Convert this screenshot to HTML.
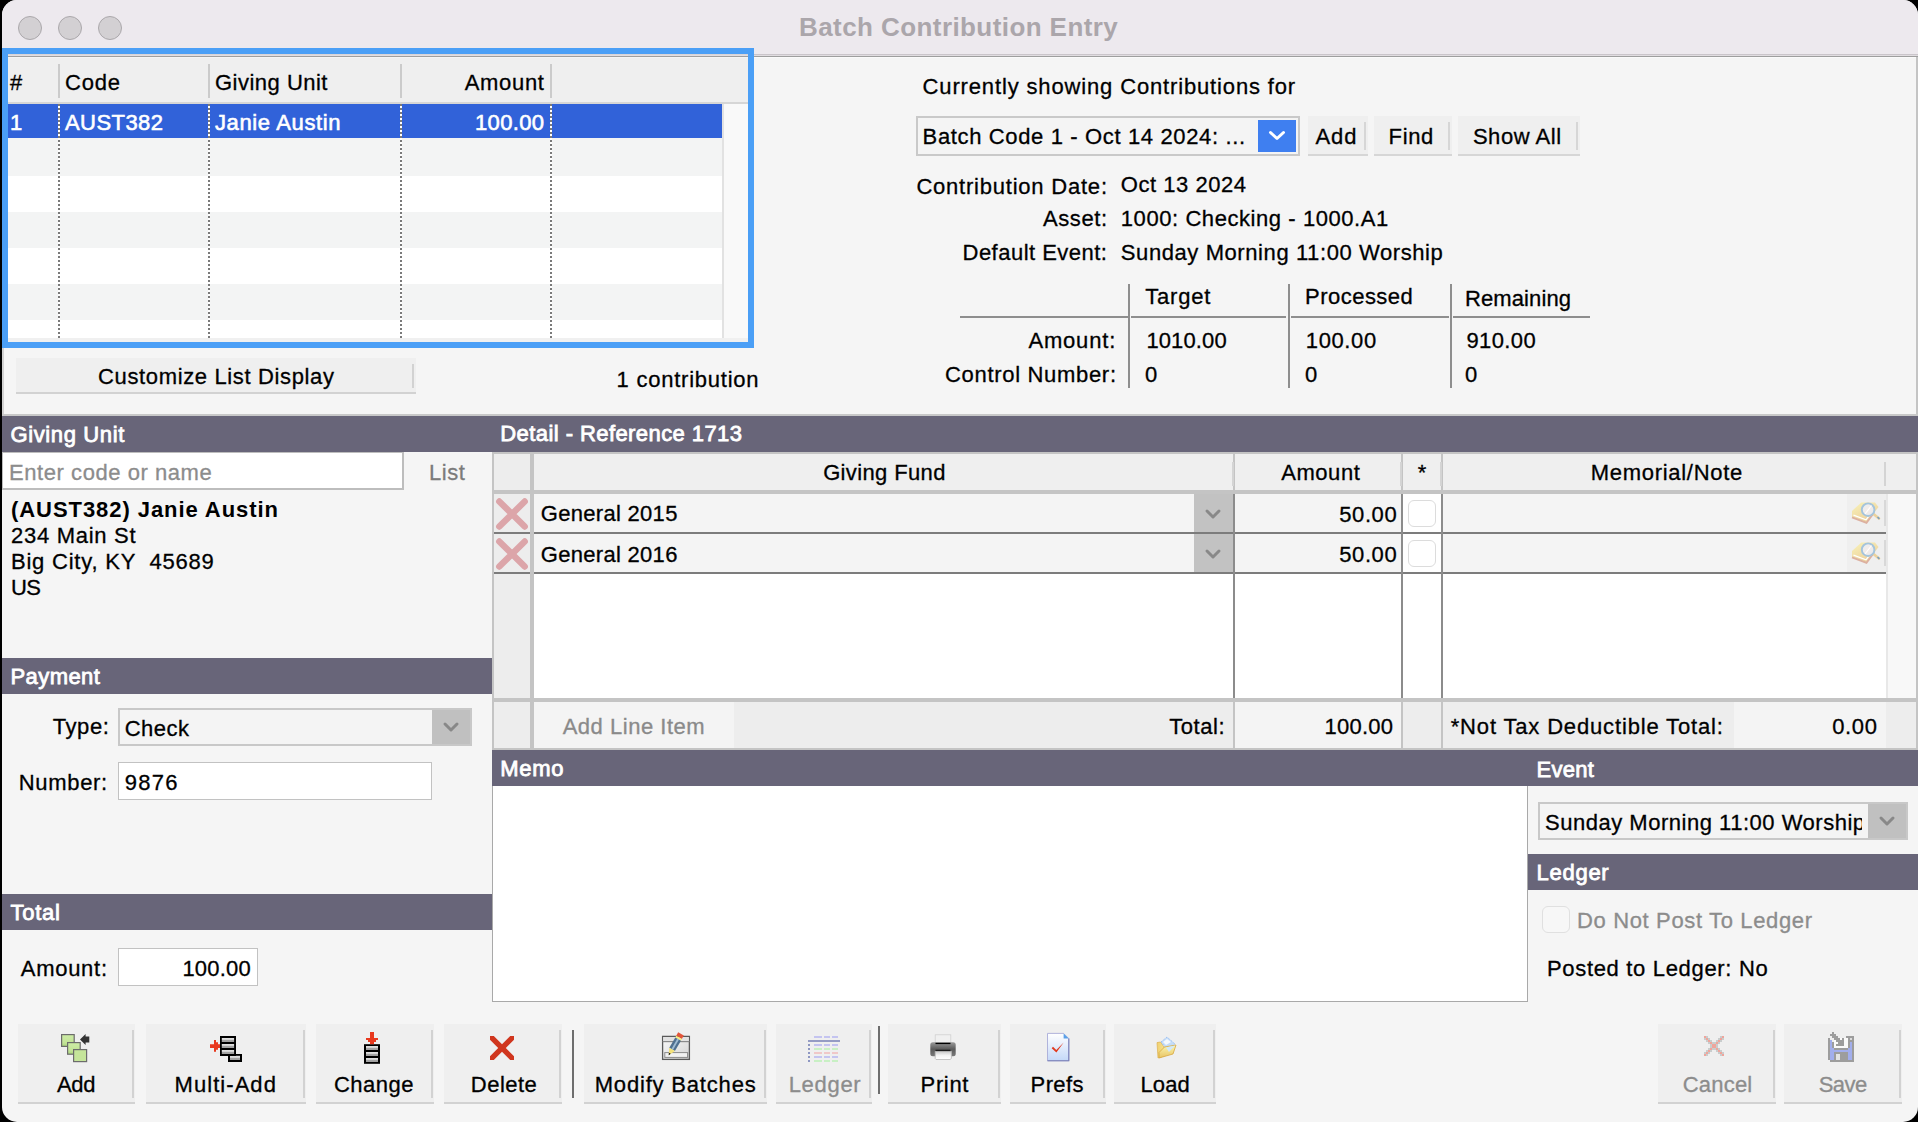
<!DOCTYPE html>
<html><head><meta charset="utf-8">
<style>
*{box-sizing:border-box;margin:0;padding:0}
html,body{width:1918px;height:1122px;overflow:hidden;background:#000}
body{font-family:"Liberation Sans",sans-serif;font-size:23px;color:#000;position:relative}
.a{position:absolute}
.t{position:absolute;white-space:pre;line-height:1;-webkit-text-stroke:0.3px}
.tb{-webkit-text-stroke:0.8px}
svg{position:absolute;overflow:visible}
#win{position:absolute;left:2px;top:0;width:1916px;height:1122px;background:#f5f5f5;border-radius:15px;overflow:hidden}
#in{position:absolute;left:-2px;top:0;width:1918px;height:1122px}
</style></head><body>
<div id="win"><div id="in">
<div class="a" style="left:0px;top:0px;width:1918px;height:54px;background:#ede9ee;"></div>
<div class="a" style="left:0px;top:54px;width:1918px;height:1px;background:#cac5ca;"></div>
<div class="a" style="left:0px;top:55px;width:1918px;height:1px;background:#e1dde1;"></div>
<div class="a" style="left:0px;top:56px;width:1918px;height:1px;background:#9e9e9e;"></div>
<div class="a" style="left:0px;top:57px;width:1918px;height:1px;background:#fafafa;"></div>
<div class="a" style="left:18px;top:16px;width:24px;height:24px;background:#d3d0d3;border-radius:50%;border:1px solid #aba8ab;"></div>
<div class="a" style="left:58px;top:16px;width:24px;height:24px;background:#d3d0d3;border-radius:50%;border:1px solid #aba8ab;"></div>
<div class="a" style="left:98px;top:16px;width:24px;height:24px;background:#d3d0d3;border-radius:50%;border:1px solid #aba8ab;"></div>
<div class="t" style="left:799.05px;top:13.80px;font-size:26px;color:#aba6ab;font-weight:700;letter-spacing:0.418px;-webkit-text-stroke:0;">Batch Contribution Entry</div>
<div class="a" style="left:2px;top:57px;width:2px;height:359px;background:#d2d2d2;"></div>
<div class="a" style="left:1916px;top:57px;width:2px;height:359px;background:#c4c4c4;"></div>
<div class="a" style="left:2px;top:414px;width:1916px;height:2px;background:#c8c8c8;"></div>
<div class="a" style="left:2px;top:48px;width:752px;height:300px;background:#4b9ff6;"></div>
<div class="a" style="left:8px;top:54px;width:740px;height:288px;background:#f4f4f4;"></div>
<div class="a" style="left:8px;top:54px;width:740px;height:1px;background:#d9d4d6;"></div>
<div class="a" style="left:8px;top:55px;width:740px;height:1px;background:#e1dde1;"></div>
<div class="a" style="left:8px;top:56px;width:740px;height:1px;background:#9e9e9e;"></div>
<div class="a" style="left:8px;top:57px;width:740px;height:1px;background:#f4f4f4;"></div>
<div class="a" style="left:8px;top:58px;width:740px;height:44px;background:#efefef;"></div>
<div class="a" style="left:8px;top:102px;width:740px;height:2px;background:#d6d6d6;"></div>
<div class="a" style="left:58px;top:64px;width:2px;height:34px;background:#cbcbcb;"></div>
<div class="a" style="left:208px;top:64px;width:2px;height:34px;background:#cbcbcb;"></div>
<div class="a" style="left:400px;top:64px;width:2px;height:34px;background:#cbcbcb;"></div>
<div class="a" style="left:550px;top:64px;width:2px;height:34px;background:#cbcbcb;"></div>
<div class="a" style="left:8px;top:104px;width:714px;height:34px;background:#3162d9;"></div>
<div class="a" style="left:8px;top:138px;width:714px;height:38px;background:#f3f4f4;"></div>
<div class="a" style="left:8px;top:176px;width:714px;height:36px;background:#ffffff;"></div>
<div class="a" style="left:8px;top:212px;width:714px;height:36px;background:#f3f4f4;"></div>
<div class="a" style="left:8px;top:248px;width:714px;height:36px;background:#ffffff;"></div>
<div class="a" style="left:8px;top:284px;width:714px;height:36px;background:#f3f4f4;"></div>
<div class="a" style="left:8px;top:320px;width:714px;height:18px;background:#ffffff;"></div>
<div class="a" style="left:722px;top:104px;width:2px;height:234px;background:#e2e2e2;"></div>
<div class="a" style="left:724px;top:104px;width:24px;height:234px;background:#f9f9f9;"></div>
<div class="a" style="left:8px;top:338px;width:740px;height:4px;background:#f0f0f0;"></div>
<div class="a" style="left:58px;top:104px;width:2px;height:234px;background:repeating-linear-gradient(to bottom,#7a7a7a 0,#7a7a7a 2px,#ffffff 2px,#ffffff 4px);"></div>
<div class="a" style="left:208px;top:104px;width:2px;height:234px;background:repeating-linear-gradient(to bottom,#7a7a7a 0,#7a7a7a 2px,#ffffff 2px,#ffffff 4px);"></div>
<div class="a" style="left:400px;top:104px;width:2px;height:234px;background:repeating-linear-gradient(to bottom,#7a7a7a 0,#7a7a7a 2px,#ffffff 2px,#ffffff 4px);"></div>
<div class="a" style="left:550px;top:104px;width:2px;height:234px;background:repeating-linear-gradient(to bottom,#7a7a7a 0,#7a7a7a 2px,#ffffff 2px,#ffffff 4px);"></div>
<div class="t" style="left:10.00px;top:72.00px;font-size:22.0px;color:#000;">#</div>
<div class="t" style="left:65.00px;top:72.00px;font-size:22.0px;color:#000;letter-spacing:0.797px;">Code</div>
<div class="t" style="left:215.00px;top:72.00px;font-size:22.0px;color:#000;letter-spacing:0.489px;">Giving Unit</div>
<div class="t" style="left:464.73px;top:72.00px;font-size:22.0px;color:#000;letter-spacing:0.688px;">Amount</div>
<div class="t" style="left:10.00px;top:112.00px;font-size:22.0px;color:#fff;-webkit-text-stroke:0.6px;">1</div>
<div class="t" style="left:65.00px;top:112.00px;font-size:22.0px;color:#fff;letter-spacing:0.435px;-webkit-text-stroke:0.6px;">AUST382</div>
<div class="t" style="left:215.00px;top:112.00px;font-size:22.0px;color:#fff;letter-spacing:0.624px;-webkit-text-stroke:0.6px;">Janie Austin</div>
<div class="t" style="left:475.00px;top:112.00px;font-size:22.0px;color:#fff;letter-spacing:0.341px;-webkit-text-stroke:0.6px;">100.00</div>
<div class="a" style="left:16px;top:358px;width:400px;height:36px;background:#efefef;"></div>
<div class="a" style="left:16px;top:392px;width:400px;height:2px;background:#d2d2d2;"></div>
<div class="a" style="left:412px;top:364px;width:2px;height:24px;background:#d2d2d2;"></div>
<div class="t" style="left:98.00px;top:366.30px;font-size:22.0px;color:#000;letter-spacing:0.642px;">Customize List Display</div>
<div class="t" style="left:616.60px;top:368.60px;font-size:22.0px;color:#000;letter-spacing:0.762px;">1 contribution</div>
<div class="t" style="left:922.60px;top:76.00px;font-size:22.0px;color:#000;letter-spacing:0.853px;">Currently showing Contributions for</div>
<div class="a" style="left:916px;top:116px;width:384px;height:40px;background:#c9c9c9;"></div>
<div class="a" style="left:918px;top:118px;width:380px;height:36px;background:#f4f4f4;"></div>
<div class="a" style="left:1258px;top:120px;width:38px;height:32px;background:#3f7ff0;"></div>
<svg style="left:1268px;top:129px" width="18" height="14" viewBox="0 0 18 14"><path d="M2.5 3.5 L9 9.5 L15.5 3.5" fill="none" stroke="#fff" stroke-width="3" stroke-linecap="round" stroke-linejoin="round"/></svg>
<div class="t" style="left:922.60px;top:126.00px;font-size:22.0px;color:#000;letter-spacing:0.637px;">Batch Code 1 - Oct 14 2024: ...</div>
<div class="a" style="left:1308px;top:116px;width:60px;height:40px;background:#efefef;"></div>
<div class="a" style="left:1308px;top:154px;width:60px;height:2px;background:#d6d6d6;"></div>
<div class="a" style="left:1364px;top:122px;width:2px;height:28px;background:#d6d6d6;"></div>
<div class="t" style="left:1315.53px;top:126.00px;font-size:22.0px;color:#000;letter-spacing:0.891px;">Add</div>
<div class="a" style="left:1374px;top:116px;width:78px;height:40px;background:#efefef;"></div>
<div class="a" style="left:1374px;top:154px;width:78px;height:2px;background:#d6d6d6;"></div>
<div class="a" style="left:1448px;top:122px;width:2px;height:28px;background:#d6d6d6;"></div>
<div class="t" style="left:1388.62px;top:126.00px;font-size:22.0px;color:#000;letter-spacing:0.651px;">Find</div>
<div class="a" style="left:1458px;top:116px;width:122px;height:40px;background:#efefef;"></div>
<div class="a" style="left:1458px;top:154px;width:122px;height:2px;background:#d6d6d6;"></div>
<div class="a" style="left:1576px;top:122px;width:2px;height:28px;background:#d6d6d6;"></div>
<div class="t" style="left:1472.89px;top:126.00px;font-size:22.0px;color:#000;letter-spacing:0.547px;">Show All</div>
<div class="t" style="left:916.40px;top:176.30px;font-size:22.0px;color:#000;letter-spacing:0.781px;">Contribution Date:</div>
<div class="t" style="left:1120.80px;top:174.10px;font-size:22.0px;color:#000;letter-spacing:0.544px;">Oct 13 2024</div>
<div class="t" style="left:1043.08px;top:208.00px;font-size:22.0px;color:#000;letter-spacing:0.556px;">Asset:</div>
<div class="t" style="left:1120.80px;top:208.00px;font-size:22.0px;color:#000;letter-spacing:0.569px;">1000: Checking - 1000.A1</div>
<div class="t" style="left:962.53px;top:242.00px;font-size:22.0px;color:#000;letter-spacing:0.483px;">Default Event:</div>
<div class="t" style="left:1120.80px;top:242.00px;font-size:22.0px;color:#000;letter-spacing:0.587px;">Sunday Morning 11:00 Worship</div>
<div class="a" style="left:960px;top:315.5px;width:168px;height:2.0px;background:#8e8e8e;"></div>
<div class="a" style="left:1131px;top:315.5px;width:155px;height:2.0px;background:#8e8e8e;"></div>
<div class="a" style="left:1291px;top:315.5px;width:158px;height:2.0px;background:#8e8e8e;"></div>
<div class="a" style="left:1453px;top:315.5px;width:137px;height:2.0px;background:#8e8e8e;"></div>
<div class="a" style="left:1128px;top:284px;width:2px;height:104px;background:#8e8e8e;"></div>
<div class="a" style="left:1288px;top:284px;width:2px;height:104px;background:#8e8e8e;"></div>
<div class="a" style="left:1450px;top:284px;width:2px;height:104px;background:#8e8e8e;"></div>
<div class="t" style="left:1145.30px;top:286.00px;font-size:22.0px;color:#000;letter-spacing:0.769px;">Target</div>
<div class="t" style="left:1305.10px;top:286.00px;font-size:22.0px;color:#000;letter-spacing:0.468px;">Processed</div>
<div class="t" style="left:1465.00px;top:288.40px;font-size:22.0px;color:#000;letter-spacing:0.104px;">Remaining</div>
<div class="t" style="left:1028.40px;top:330.30px;font-size:22.0px;color:#000;letter-spacing:0.827px;">Amount:</div>
<div class="t" style="left:1146.40px;top:330.30px;font-size:22.0px;color:#000;letter-spacing:0.128px;">1010.00</div>
<div class="t" style="left:1305.80px;top:330.30px;font-size:22.0px;color:#000;letter-spacing:0.621px;">100.00</div>
<div class="t" style="left:1466.40px;top:330.30px;font-size:22.0px;color:#000;letter-spacing:0.401px;">910.00</div>
<div class="t" style="left:945.00px;top:364.00px;font-size:22.0px;color:#000;letter-spacing:0.686px;">Control Number:</div>
<div class="t" style="left:1145.00px;top:364.00px;font-size:22.0px;color:#000;">0</div>
<div class="t" style="left:1305.00px;top:364.00px;font-size:22.0px;color:#000;">0</div>
<div class="t" style="left:1465.00px;top:364.00px;font-size:22.0px;color:#000;">0</div>
<div class="a" style="left:2px;top:416px;width:1916px;height:36px;background:#686579;"></div>
<div class="t" style="left:10.40px;top:424.00px;font-size:22.0px;color:#fff;letter-spacing:0.631px;-webkit-text-stroke:0.8px;">Giving Unit</div>
<div class="t" style="left:500.30px;top:423.20px;font-size:22.0px;color:#fff;letter-spacing:0.425px;-webkit-text-stroke:0.8px;">Detail - Reference 1713</div>
<div class="a" style="left:2px;top:452px;width:402px;height:38px;background:#bdbdbd;"></div>
<div class="a" style="left:3px;top:453px;width:399px;height:35px;background:#ffffff;"></div>
<div class="t" style="left:9.10px;top:461.60px;font-size:22.0px;color:#8c8c8c;letter-spacing:0.551px;">Enter code or name</div>
<div class="t" style="left:429.00px;top:462.00px;font-size:22.0px;color:#7b7b7b;letter-spacing:0.516px;">List</div>
<div class="t" style="left:11.00px;top:499.40px;font-size:22.0px;color:#000;font-weight:700;letter-spacing:0.935px;-webkit-text-stroke:0;">(AUST382) Janie Austin</div>
<div class="t" style="left:11.00px;top:525.00px;font-size:22.0px;color:#000;letter-spacing:0.719px;">234 Main St</div>
<div class="t" style="left:11.00px;top:551.00px;font-size:22.0px;color:#000;letter-spacing:0.781px;">Big City, KY  45689</div>
<div class="t" style="left:11.00px;top:576.60px;font-size:22.0px;color:#000;letter-spacing:-0.562px;">US</div>
<div class="a" style="left:2px;top:658px;width:490px;height:36px;background:#686579;"></div>
<div class="t" style="left:10.50px;top:665.90px;font-size:22.0px;color:#fff;letter-spacing:0.429px;-webkit-text-stroke:0.8px;">Payment</div>
<div class="a" style="left:118px;top:708px;width:354px;height:38px;background:#c8c8c8;"></div>
<div class="a" style="left:120px;top:710px;width:312px;height:34px;background:#f4f4f4;"></div>
<div class="a" style="left:432px;top:710px;width:38px;height:34px;background:#c0c0c0;"></div>
<svg style="left:443px;top:721px" width="16" height="12" viewBox="0 0 16 12"><path d="M2 3 L8 9 L14 3" fill="none" stroke="#888888" stroke-width="3" stroke-linecap="round" stroke-linejoin="round"/></svg>
<div class="t" style="left:52.80px;top:716.00px;font-size:22.0px;color:#000;letter-spacing:0.547px;">Type:</div>
<div class="t" style="left:124.70px;top:717.60px;font-size:22.0px;color:#000;letter-spacing:0.485px;">Check</div>
<div class="a" style="left:118px;top:762px;width:314px;height:38px;background:#c2c2c2;"></div>
<div class="a" style="left:119px;top:763px;width:312px;height:36px;background:#ffffff;"></div>
<div class="t" style="left:18.80px;top:772.00px;font-size:22.0px;color:#000;letter-spacing:0.673px;">Number:</div>
<div class="t" style="left:124.70px;top:772.00px;font-size:22.0px;color:#000;letter-spacing:1.282px;">9876</div>
<div class="a" style="left:2px;top:894px;width:490px;height:36px;background:#686579;"></div>
<div class="t" style="left:10.50px;top:901.70px;font-size:22.0px;color:#fff;letter-spacing:0.754px;-webkit-text-stroke:0.8px;">Total</div>
<div class="a" style="left:118px;top:948px;width:140px;height:38px;background:#c2c2c2;"></div>
<div class="a" style="left:119px;top:949px;width:138px;height:36px;background:#ffffff;"></div>
<div class="t" style="left:20.80px;top:957.70px;font-size:22.0px;color:#000;letter-spacing:0.710px;">Amount:</div>
<div class="t" style="left:182.40px;top:957.70px;font-size:22.0px;color:#000;letter-spacing:0.201px;">100.00</div>
<div class="a" style="left:492px;top:452px;width:1426px;height:298px;background:#c4c4c4;"></div>
<div class="a" style="left:494px;top:454px;width:36px;height:36px;background:#ededed;"></div>
<div class="a" style="left:534px;top:454px;width:699px;height:36px;background:#efefef;"></div>
<div class="a" style="left:1235px;top:454px;width:166px;height:36px;background:#efefef;"></div>
<div class="a" style="left:1403px;top:454px;width:38px;height:36px;background:#efefef;"></div>
<div class="a" style="left:1443px;top:454px;width:473px;height:36px;background:#efefef;"></div>
<div class="a" style="left:1232px;top:462px;width:2px;height:24px;background:#d4d4d4;"></div>
<div class="a" style="left:1400px;top:462px;width:2px;height:24px;background:#d4d4d4;"></div>
<div class="a" style="left:1440px;top:462px;width:2px;height:24px;background:#d4d4d4;"></div>
<div class="a" style="left:1884px;top:462px;width:2px;height:24px;background:#d4d4d4;"></div>
<div class="t" style="left:823.15px;top:462.00px;font-size:22.0px;color:#000;letter-spacing:0.367px;">Giving Fund</div>
<div class="t" style="left:1281.15px;top:462.00px;font-size:22.0px;color:#000;letter-spacing:0.574px;">Amount</div>
<div class="t" style="left:1417.72px;top:462.00px;font-size:22.0px;color:#000;">*</div>
<div class="t" style="left:1590.80px;top:462.00px;font-size:22.0px;color:#000;letter-spacing:0.696px;">Memorial/Note</div>
<div class="a" style="left:494px;top:494px;width:36px;height:204px;background:#ededed;"></div>
<div class="a" style="left:494px;top:532px;width:36px;height:2px;background:#7c7c7c;"></div>
<div class="a" style="left:494px;top:572px;width:36px;height:2px;background:#7c7c7c;"></div>
<div class="a" style="left:534px;top:494px;width:1382px;height:204px;background:#ffffff;"></div>
<div class="a" style="left:1886px;top:494px;width:30px;height:204px;background:#f8f8f8;"></div>
<div class="a" style="left:1886px;top:494px;width:2px;height:204px;background:#e8e8e8;"></div>
<div class="a" style="left:534px;top:494px;width:660px;height:38px;background:#f4f4f4;"></div>
<div class="a" style="left:1194px;top:494px;width:39px;height:38px;background:#c2c2c2;"></div>
<div class="a" style="left:1235px;top:494px;width:166px;height:38px;background:#f4f4f4;"></div>
<div class="a" style="left:1443px;top:494px;width:404px;height:38px;background:#f4f4f4;"></div>
<div class="a" style="left:1847px;top:494px;width:39px;height:38px;background:#efefef;"></div>
<div class="a" style="left:1884px;top:500px;width:2px;height:26px;background:#d8d8d8;"></div>
<div class="a" style="left:534px;top:534px;width:660px;height:38px;background:#f4f4f4;"></div>
<div class="a" style="left:1194px;top:534px;width:39px;height:38px;background:#c2c2c2;"></div>
<div class="a" style="left:1235px;top:534px;width:166px;height:38px;background:#f4f4f4;"></div>
<div class="a" style="left:1443px;top:534px;width:404px;height:38px;background:#f4f4f4;"></div>
<div class="a" style="left:1847px;top:534px;width:39px;height:38px;background:#efefef;"></div>
<div class="a" style="left:1884px;top:540px;width:2px;height:26px;background:#d8d8d8;"></div>
<div class="a" style="left:534px;top:532px;width:1352px;height:2px;background:#7c7c7c;"></div>
<div class="a" style="left:534px;top:572px;width:1352px;height:2px;background:#7c7c7c;"></div>
<div class="a" style="left:530px;top:494px;width:4px;height:204px;background:#c4c4c4;"></div>
<div class="a" style="left:1233px;top:494px;width:2px;height:204px;background:#8c8c8c;"></div>
<div class="a" style="left:1401px;top:494px;width:2px;height:204px;background:#8c8c8c;"></div>
<div class="a" style="left:1441px;top:494px;width:2px;height:204px;background:#8c8c8c;"></div>
<div class="t" style="left:540.80px;top:503.40px;font-size:22.0px;color:#000;letter-spacing:0.297px;">General 2015</div>
<div class="t" style="left:540.80px;top:544.00px;font-size:22.0px;color:#000;letter-spacing:0.297px;">General 2016</div>
<div class="t" style="left:1339.20px;top:504.40px;font-size:22.0px;color:#000;letter-spacing:0.609px;">50.00</div>
<div class="t" style="left:1339.20px;top:544.00px;font-size:22.0px;color:#000;letter-spacing:0.609px;">50.00</div>
<div class="a" style="left:1408px;top:500px;width:28px;height:27px;background:#ffffff;border:1px solid #dcdcdc;border-radius:6px;"></div>
<div class="a" style="left:1408px;top:540px;width:28px;height:27px;background:#ffffff;border:1px solid #dcdcdc;border-radius:6px;"></div>
<svg style="left:1205px;top:508px" width="16" height="12" viewBox="0 0 16 12"><path d="M2 3 L8 9 L14 3" fill="none" stroke="#888888" stroke-width="3" stroke-linecap="round" stroke-linejoin="round"/></svg>
<svg style="left:1205px;top:548px" width="16" height="12" viewBox="0 0 16 12"><path d="M2 3 L8 9 L14 3" fill="none" stroke="#888888" stroke-width="3" stroke-linecap="round" stroke-linejoin="round"/></svg>
<div class="a" style="left:494px;top:702px;width:36px;height:46px;background:#ededed;"></div>
<div class="a" style="left:534px;top:702px;width:200px;height:46px;background:#f4f4f4;"></div>
<div class="a" style="left:734px;top:702px;width:499px;height:46px;background:#ededed;"></div>
<div class="a" style="left:1235px;top:702px;width:166px;height:46px;background:#f4f4f4;"></div>
<div class="a" style="left:1403px;top:702px;width:38px;height:46px;background:#ededed;"></div>
<div class="a" style="left:1443px;top:702px;width:291px;height:46px;background:#ededed;"></div>
<div class="a" style="left:1734px;top:702px;width:152px;height:46px;background:#f4f4f4;"></div>
<div class="a" style="left:1886px;top:702px;width:30px;height:46px;background:#ededed;"></div>
<div class="t" style="left:562.70px;top:716.40px;font-size:22.0px;color:#8a8a8a;letter-spacing:0.513px;">Add Line Item</div>
<div class="t" style="left:1169.30px;top:716.00px;font-size:22.0px;color:#000;letter-spacing:0.541px;">Total:</div>
<div class="t" style="left:1324.50px;top:716.00px;font-size:22.0px;color:#000;letter-spacing:0.241px;">100.00</div>
<div class="t" style="left:1450.70px;top:716.00px;font-size:22.0px;color:#000;letter-spacing:0.844px;">*Not Tax Deductible Total:</div>
<div class="t" style="left:1832.23px;top:716.00px;font-size:22.0px;color:#000;letter-spacing:0.646px;">0.00</div>
<div class="a" style="left:492px;top:750px;width:1426px;height:36px;background:#686579;"></div>
<div class="t" style="left:500.30px;top:758.00px;font-size:22.0px;color:#fff;letter-spacing:0.692px;-webkit-text-stroke:0.8px;">Memo</div>
<div class="t" style="left:1536.50px;top:758.60px;font-size:22.0px;color:#fff;letter-spacing:0.259px;-webkit-text-stroke:0.8px;">Event</div>
<div class="a" style="left:492px;top:786px;width:1036px;height:216px;background:#a9a9a9;"></div>
<div class="a" style="left:493px;top:786px;width:1034px;height:215px;background:#ffffff;"></div>
<div class="a" style="left:1538px;top:802px;width:370px;height:38px;background:#c8c8c8;"></div>
<div class="a" style="left:1540px;top:804px;width:328px;height:34px;background:#f4f4f4;"></div>
<div class="a" style="left:1868px;top:804px;width:38px;height:34px;background:#c0c0c0;"></div>
<svg style="left:1879px;top:815px" width="16" height="12" viewBox="0 0 16 12"><path d="M2 3 L8 9 L14 3" fill="none" stroke="#888888" stroke-width="3" stroke-linecap="round" stroke-linejoin="round"/></svg>
<div class="a" style="left:1540px;top:804px;width:322px;height:34px;overflow:hidden">
<div class="t" style="left:5.00px;top:8.00px;font-size:22.0px;color:#000;letter-spacing:0.515px;">Sunday Morning 11:00 Worship</div>
</div>
<div class="a" style="left:1528px;top:854px;width:390px;height:36px;background:#686579;"></div>
<div class="t" style="left:1536.50px;top:861.60px;font-size:22.0px;color:#fff;letter-spacing:0.737px;-webkit-text-stroke:0.8px;">Ledger</div>
<div class="a" style="left:1542px;top:906px;width:28px;height:27px;background:#f7f7f7;border:1px solid #e0e0e0;border-radius:6px;"></div>
<div class="t" style="left:1577.00px;top:909.70px;font-size:22.0px;color:#8c8c8c;letter-spacing:0.641px;">Do Not Post To Ledger</div>
<div class="t" style="left:1547.00px;top:957.90px;font-size:22.0px;color:#000;letter-spacing:0.673px;">Posted to Ledger: No</div>
<div class="a" style="left:18px;top:1024px;width:117px;height:80px;background:#efefef;"></div>
<div class="a" style="left:18px;top:1102px;width:117px;height:2px;background:#d2d2d2;"></div>
<div class="a" style="left:132px;top:1030px;width:2px;height:68px;background:#d2d2d2;"></div>
<div class="t" style="left:57.00px;top:1074.00px;font-size:22.0px;color:#000;letter-spacing:-0.378px;">Add</div>
<div class="a" style="left:146px;top:1024px;width:160px;height:80px;background:#efefef;"></div>
<div class="a" style="left:146px;top:1102px;width:160px;height:2px;background:#d2d2d2;"></div>
<div class="a" style="left:303px;top:1030px;width:2px;height:68px;background:#d2d2d2;"></div>
<div class="t" style="left:174.50px;top:1074.00px;font-size:22.0px;color:#000;letter-spacing:1.060px;">Multi-Add</div>
<div class="a" style="left:316px;top:1024px;width:118px;height:80px;background:#efefef;"></div>
<div class="a" style="left:316px;top:1102px;width:118px;height:2px;background:#d2d2d2;"></div>
<div class="a" style="left:431px;top:1030px;width:2px;height:68px;background:#d2d2d2;"></div>
<div class="t" style="left:333.95px;top:1074.00px;font-size:22.0px;color:#000;letter-spacing:0.484px;">Change</div>
<div class="a" style="left:444px;top:1024px;width:118px;height:80px;background:#efefef;"></div>
<div class="a" style="left:444px;top:1102px;width:118px;height:2px;background:#d2d2d2;"></div>
<div class="a" style="left:559px;top:1030px;width:2px;height:68px;background:#d2d2d2;"></div>
<div class="t" style="left:470.80px;top:1074.00px;font-size:22.0px;color:#000;letter-spacing:0.481px;">Delete</div>
<div class="a" style="left:572px;top:1030px;width:2px;height:68px;background:#6e6e6e;"></div>
<div class="a" style="left:584px;top:1024px;width:183px;height:80px;background:#efefef;"></div>
<div class="a" style="left:584px;top:1102px;width:183px;height:2px;background:#d2d2d2;"></div>
<div class="a" style="left:764px;top:1030px;width:2px;height:68px;background:#d2d2d2;"></div>
<div class="t" style="left:594.70px;top:1074.00px;font-size:22.0px;color:#000;letter-spacing:0.815px;">Modify Batches</div>
<div class="a" style="left:776px;top:1024px;width:96px;height:80px;background:#efefef;"></div>
<div class="a" style="left:776px;top:1102px;width:96px;height:2px;background:#d2d2d2;"></div>
<div class="a" style="left:869px;top:1030px;width:2px;height:68px;background:#d2d2d2;"></div>
<div class="t" style="left:788.70px;top:1074.00px;font-size:22.0px;color:#8c8c8c;letter-spacing:0.697px;">Ledger</div>
<div class="a" style="left:878px;top:1026px;width:2px;height:68px;background:#6e6e6e;"></div>
<div class="a" style="left:888px;top:1024px;width:113px;height:80px;background:#efefef;"></div>
<div class="a" style="left:888px;top:1102px;width:113px;height:2px;background:#d2d2d2;"></div>
<div class="a" style="left:998px;top:1030px;width:2px;height:68px;background:#d2d2d2;"></div>
<div class="t" style="left:920.55px;top:1074.00px;font-size:22.0px;color:#000;letter-spacing:0.662px;">Print</div>
<div class="a" style="left:1010px;top:1024px;width:96px;height:80px;background:#efefef;"></div>
<div class="a" style="left:1010px;top:1102px;width:96px;height:2px;background:#d2d2d2;"></div>
<div class="a" style="left:1103px;top:1030px;width:2px;height:68px;background:#d2d2d2;"></div>
<div class="t" style="left:1030.60px;top:1074.00px;font-size:22.0px;color:#000;letter-spacing:0.360px;">Prefs</div>
<div class="a" style="left:1114px;top:1024px;width:102px;height:80px;background:#efefef;"></div>
<div class="a" style="left:1114px;top:1102px;width:102px;height:2px;background:#d2d2d2;"></div>
<div class="a" style="left:1213px;top:1030px;width:2px;height:68px;background:#d2d2d2;"></div>
<div class="t" style="left:1140.45px;top:1074.00px;font-size:22.0px;color:#000;letter-spacing:0.116px;">Load</div>
<div class="a" style="left:1658px;top:1024px;width:118px;height:80px;background:#efefef;"></div>
<div class="a" style="left:1658px;top:1102px;width:118px;height:2px;background:#d2d2d2;"></div>
<div class="a" style="left:1773px;top:1030px;width:2px;height:68px;background:#d2d2d2;"></div>
<div class="t" style="left:1682.75px;top:1074.00px;font-size:22.0px;color:#8c8c8c;letter-spacing:0.203px;">Cancel</div>
<div class="a" style="left:1784px;top:1024px;width:118px;height:80px;background:#efefef;"></div>
<div class="a" style="left:1784px;top:1102px;width:118px;height:2px;background:#d2d2d2;"></div>
<div class="a" style="left:1899px;top:1030px;width:2px;height:68px;background:#d2d2d2;"></div>
<div class="t" style="left:1818.75px;top:1074.00px;font-size:22.0px;color:#8c8c8c;letter-spacing:-0.552px;">Save</div>
<svg style="left:494px;top:495.9px" width="36" height="36" viewBox="0 0 36 36"><path d="M5.3 5.5 L30.7 30.5 M30.7 5.5 L5.3 30.5" fill="none" stroke="#dca5a9" stroke-width="6.4" stroke-linecap="round"/></svg>
<svg style="left:494px;top:535.9px" width="36" height="36" viewBox="0 0 36 36"><path d="M5.3 5.5 L30.7 30.5 M30.7 5.5 L5.3 30.5" fill="none" stroke="#dca5a9" stroke-width="6.4" stroke-linecap="round"/></svg>
<svg style="left:1846px;top:494px" width="40" height="38" viewBox="0 0 40 38">
<defs><linearGradient id="bk0" x1="0" y1="0" x2="0.6" y2="1"><stop offset="0" stop-color="#f8f2b8"/><stop offset="1" stop-color="#eccf9c"/></linearGradient>
<linearGradient id="ln0" x1="0" y1="0" x2="1" y2="1"><stop offset="0" stop-color="#e6eef4"/><stop offset="0.5" stop-color="#f4ece8"/><stop offset="1" stop-color="#e0e8f0"/></linearGradient></defs>
<path d="M6 16.9 L15.3 8.4 L28.9 8.4 L32.5 12.9 L20.5 28.9 L6 23.3 Z" fill="url(#bk0)"/>
<path d="M6 23.3 L20.5 28.9 L27 20" fill="none" stroke="#dcb0a0" stroke-width="1.8"/>
<path d="M7.5 21.2 L20 25.8 L26 18" fill="none" stroke="#ffffff" stroke-width="1.3"/>
<line x1="27.5" y1="20" x2="33" y2="24.5" stroke="#ecd29c" stroke-width="2.6" stroke-linecap="round"/>
<line x1="31.5" y1="23" x2="33.4" y2="24.8" stroke="#7aa0c4" stroke-width="1.6"/>
<circle cx="22.1" cy="15.7" r="6.3" fill="url(#ln0)" stroke="#a4c4dc" stroke-width="1.9"/>
<line x1="19" y1="20" x2="25.5" y2="11.5" stroke="#ffffff" stroke-width="1.1"/>
</svg>
<svg style="left:1846px;top:534px" width="40" height="38" viewBox="0 0 40 38">
<defs><linearGradient id="bk40" x1="0" y1="0" x2="0.6" y2="1"><stop offset="0" stop-color="#f8f2b8"/><stop offset="1" stop-color="#eccf9c"/></linearGradient>
<linearGradient id="ln40" x1="0" y1="0" x2="1" y2="1"><stop offset="0" stop-color="#e6eef4"/><stop offset="0.5" stop-color="#f4ece8"/><stop offset="1" stop-color="#e0e8f0"/></linearGradient></defs>
<path d="M6 16.9 L15.3 8.4 L28.9 8.4 L32.5 12.9 L20.5 28.9 L6 23.3 Z" fill="url(#bk40)"/>
<path d="M6 23.3 L20.5 28.9 L27 20" fill="none" stroke="#dcb0a0" stroke-width="1.8"/>
<path d="M7.5 21.2 L20 25.8 L26 18" fill="none" stroke="#ffffff" stroke-width="1.3"/>
<line x1="27.5" y1="20" x2="33" y2="24.5" stroke="#ecd29c" stroke-width="2.6" stroke-linecap="round"/>
<line x1="31.5" y1="23" x2="33.4" y2="24.8" stroke="#7aa0c4" stroke-width="1.6"/>
<circle cx="22.1" cy="15.7" r="6.3" fill="url(#ln40)" stroke="#a4c4dc" stroke-width="1.9"/>
<line x1="19" y1="20" x2="25.5" y2="11.5" stroke="#ffffff" stroke-width="1.1"/>
</svg>
<svg style="left:58px;top:1030px" width="36" height="36" viewBox="58 1030 36 36">
<defs><linearGradient id="gsq" x1="0" y1="0" x2="0" y2="1"><stop offset="0" stop-color="#cdeca6"/><stop offset="0.7" stop-color="#c3e497"/><stop offset="1" stop-color="#a8d47a"/></linearGradient></defs>
<rect x="61.6" y="1034.6" width="12.6" height="11.8" fill="url(#gsq)" stroke="#6c6c6c" stroke-width="1.2"/>
<rect x="67.6" y="1042.6" width="12.6" height="11.6" fill="url(#gsq)" stroke="#6c6c6c" stroke-width="1.2"/>
<rect x="73.6" y="1049.6" width="13" height="12" fill="#c5e59a" stroke="#6c6c6c" stroke-width="1.2"/>
<path d="M80 1039.5 L85.6 1034 L85.6 1036.5 L89.3 1036.5 L89.3 1042.5 L85.6 1042.5 L85.6 1045 Z" fill="#333"/>
</svg>
<svg style="left:206px;top:1030px" width="40" height="36" viewBox="206 1030 40 36">
<defs><linearGradient id="gbar" x1="0" y1="0" x2="0" y2="1"><stop offset="0" stop-color="#e4e4e4"/><stop offset="0.45" stop-color="#d0d0d0"/><stop offset="0.55" stop-color="#a4a4a4"/><stop offset="1" stop-color="#a0a0a0"/></linearGradient></defs>
<rect x="228" y="1054" width="14" height="8" fill="#000"/>
<rect x="230" y="1055.8" width="10" height="4.2" fill="url(#gbar)"/>
<rect x="220" y="1036" width="16" height="20" fill="#000"/>
<rect x="221.8" y="1038" width="12.3" height="4" fill="url(#gbar)"/>
<rect x="221.8" y="1044" width="12.3" height="4" fill="url(#gbar)"/>
<rect x="221.8" y="1050" width="12.3" height="4" fill="url(#gbar)"/>
<path d="M210 1044.2 L214 1044.2 L214 1040 L216 1040 L216 1042.2 L218 1042.2 L218 1044.2 L220 1044.2 L220 1048 L218 1048 L218 1049.8 L216 1049.8 L216 1051.8 L214 1051.8 L214 1048 L210 1048 Z" fill="#e8391e"/>
</svg>
<svg style="left:356px;top:1028px" width="32" height="40" viewBox="356 1028 32 40">
<rect x="364" y="1044.2" width="16" height="19.6" fill="#000"/>
<rect x="366" y="1046" width="12" height="4" fill="url(#gbar)"/>
<rect x="366" y="1052" width="12" height="4" fill="url(#gbar)"/>
<rect x="366" y="1058" width="12" height="4" fill="url(#gbar)"/>
<path d="M370 1032 L374 1032 L374 1038 L378 1038 L378 1040 L376 1040 L376 1042 L374 1042 L374 1044.2 L370 1044.2 L370 1042 L368 1042 L368 1040 L366 1040 L366 1038 L370 1038 Z" fill="#e8391e"/>
</svg>
<svg style="left:486px;top:1032px" width="32" height="32" viewBox="486 1032 32 32">
<path d="M490 1036 L493.8 1036 L502 1044.2 L510.2 1036 L514 1036 L514 1039.8 L505.8 1048 L514 1056.2 L514 1060 L510.2 1060 L502 1051.8 L493.8 1060 L490 1060 L490 1056.2 L498.2 1048 L490 1039.8 Z" fill="#d0361e"/>
</svg>
<svg style="left:658px;top:1030px" width="36" height="34" viewBox="658 1030 36 34">
<defs><linearGradient id="gwin" x1="0" y1="0" x2="1" y2="1"><stop offset="0" stop-color="#fafafa"/><stop offset="1" stop-color="#d4d4d4"/></linearGradient></defs>
<rect x="662.6" y="1036.4" width="26.8" height="23" fill="url(#gwin)" stroke="#5a5a5a" stroke-width="1.3"/>
<rect x="663.3" y="1037" width="25.5" height="4.2" fill="#e2e2e2"/>
<line x1="662.6" y1="1041.6" x2="689.4" y2="1041.6" stroke="#8a8a8a" stroke-width="1.2"/>
<rect x="664.8" y="1052.6" width="22.8" height="4.8" fill="#f2f2f2" stroke="#8a8a8a" stroke-width="1"/>
<g transform="rotate(30 668.7 1055.3)">
<rect x="665.45" y="1030.7" width="6.5" height="4" fill="#e2553a"/>
<rect x="665.45" y="1034.7" width="6.5" height="1.8" fill="#f6ee80"/>
<rect x="665.45" y="1036.5" width="6.5" height="12" fill="#4f7090"/>
<rect x="667.9" y="1036.5" width="1.8" height="12" fill="#a0bcd4"/>
<path d="M665.45 1048.5 L671.95 1048.5 L668.7 1055.3 Z" fill="#f4e27a"/>
<path d="M667.6 1053 L669.8 1053 L668.7 1055.3 Z" fill="#111"/>
</g>
</svg>
<svg style="left:804px;top:1032px" width="40" height="34" viewBox="804 1032 40 34">
<g fill="#c4c4f0"><rect x="814" y="1036" width="8" height="2"/><rect x="824" y="1036" width="6" height="2"/><rect x="832" y="1036" width="6" height="2"/></g>
<rect x="808" y="1040" width="32" height="2" fill="#959cc4"/>
<g fill="#8e97c2"><rect x="808" y="1044" width="2" height="2"/><rect x="808" y="1048" width="2" height="2"/><rect x="808" y="1052" width="2" height="2"/><rect x="808" y="1056" width="2" height="2"/><rect x="808" y="1060" width="2" height="2"/></g>
<g fill="#c4c4f0"><rect x="814" y="1044" width="8" height="2"/><rect x="824" y="1044" width="6" height="2"/><rect x="832" y="1044" width="6" height="2"/></g>
<g fill="#c8f0c4"><rect x="814" y="1048" width="8" height="2"/><rect x="824" y="1048" width="6" height="2"/><rect x="832" y="1048" width="6" height="2"/></g>
<g fill="#f0c8c8"><rect x="814" y="1052" width="8" height="2"/><rect x="824" y="1052" width="6" height="2"/><rect x="832" y="1052" width="6" height="2"/></g>
<g fill="#c4c4f0"><rect x="814" y="1056" width="8" height="2"/><rect x="824" y="1056" width="6" height="2"/><rect x="832" y="1056" width="6" height="2"/></g>
<g fill="#c8f0c4"><rect x="814" y="1060" width="8" height="2"/><rect x="824" y="1060" width="6" height="2"/><rect x="832" y="1060" width="6" height="2"/></g>
</svg>
<svg style="left:926px;top:1030px" width="34" height="34" viewBox="926 1030 34 34">
<defs><linearGradient id="gpr" x1="0" y1="0" x2="0" y2="1"><stop offset="0" stop-color="#9a9a9a"/><stop offset="0.5" stop-color="#5a5a5a"/><stop offset="1" stop-color="#7a7a7a"/></linearGradient>
<linearGradient id="gpp" x1="0" y1="0" x2="0" y2="1"><stop offset="0" stop-color="#c8c8c8"/><stop offset="0.5" stop-color="#f4f4f4"/><stop offset="1" stop-color="#ffffff"/></linearGradient></defs>
<rect x="935.2" y="1034.8" width="15.6" height="8" fill="#f0f0f0" stroke="#d0d0d0" stroke-width="0.8"/>
<rect x="930.3" y="1042.2" width="25.4" height="14" rx="2.5" fill="url(#gpr)"/>
<rect x="935.5" y="1042.8" width="15" height="1.3" fill="#000"/>
<rect x="935.5" y="1049.8" width="15" height="1.6" fill="#000"/>
<path d="M935.2 1051.3 L951.4 1051.3 L951.4 1058.5 L950 1059.5 L936 1059.5 L935.2 1058.5 Z" fill="url(#gpp)" stroke="#b8b8b8" stroke-width="0.8"/>
</svg>
<svg style="left:1043px;top:1030px" width="32" height="36" viewBox="1043 1030 32 36">
<defs><linearGradient id="gpg" x1="0" y1="0" x2="0" y2="1"><stop offset="0" stop-color="#ffffff"/><stop offset="1" stop-color="#c4d8f8"/></linearGradient></defs>
<path d="M1047.5 1033.4 L1063.6 1033.4 L1068.8 1038.6 L1068.8 1060.8 L1047.5 1060.8 Z" fill="url(#gpg)" stroke="#a8acd8" stroke-width="0.9"/>
<path d="M1068.8 1038.6 L1068.8 1060.8 L1047.5 1060.8" fill="none" stroke="#7a80b8" stroke-width="1.1"/>
<path d="M1063.6 1033.4 L1063.6 1038.6 L1068.8 1038.6 Z" fill="#5aa0e8"/>
<path d="M1051.7 1048.2 L1053 1046.8 L1056.3 1050 L1063.7 1042.4 L1056.4 1052.6 Z" fill="#e23a1e"/>
</svg>
<svg style="left:1152px;top:1032px" width="28" height="30" viewBox="1152 1032 28 30">
<defs><linearGradient id="gfo" x1="0" y1="0" x2="0" y2="1"><stop offset="0" stop-color="#fbf6b0"/><stop offset="1" stop-color="#e8c464"/></linearGradient>
<linearGradient id="gfb" x1="0" y1="0" x2="1" y2="0"><stop offset="0" stop-color="#f0d070"/><stop offset="1" stop-color="#f6e08c"/></linearGradient></defs>
<path d="M1157 1042.6 L1160.5 1042 L1164 1047 L1164 1056 L1158 1058 Z" fill="url(#gfb)" stroke="#dcb050" stroke-width="0.7"/>
<path d="M1161 1042 L1167 1037 L1175 1044 L1169 1052 Z" fill="#c4dcf8" stroke="#88b4f0" stroke-width="0.8" stroke-dasharray="1.2 1"/>
<path d="M1163 1042 L1167 1039 L1171 1042 L1166 1045 Z" fill="#f4f8fc"/>
<path d="M1159 1052.5 L1164.5 1047 L1176 1045 L1173 1054 L1159 1058 Z" fill="url(#gfo)" stroke="#d8a840" stroke-width="0.8"/>
<path d="M1166 1047.5 L1175 1045.5 L1169 1052 Z" fill="#d0e8fc"/>
</svg>
<svg style="left:1704px;top:1036px" width="20" height="20" viewBox="0 0 20 20"><rect x="2" y="0" width="2" height="2" fill="#c9cdcd"/><rect x="16" y="0" width="2" height="2" fill="#c9cdcd"/><rect x="0" y="2" width="2" height="2" fill="#c9cdcd"/><rect x="4" y="2" width="2" height="2" fill="#c9cdcd"/><rect x="14" y="2" width="2" height="2" fill="#c9cdcd"/><rect x="18" y="2" width="2" height="2" fill="#c9cdcd"/><rect x="2" y="4" width="2" height="2" fill="#c9cdcd"/><rect x="6" y="4" width="2" height="2" fill="#c9cdcd"/><rect x="12" y="4" width="2" height="2" fill="#c9cdcd"/><rect x="16" y="4" width="2" height="2" fill="#c9cdcd"/><rect x="4" y="6" width="2" height="2" fill="#c9cdcd"/><rect x="8" y="6" width="2" height="2" fill="#c9cdcd"/><rect x="10" y="6" width="2" height="2" fill="#c9cdcd"/><rect x="14" y="6" width="2" height="2" fill="#c9cdcd"/><rect x="6" y="8" width="2" height="2" fill="#c9cdcd"/><rect x="12" y="8" width="2" height="2" fill="#c9cdcd"/><rect x="6" y="10" width="2" height="2" fill="#c9cdcd"/><rect x="12" y="10" width="2" height="2" fill="#c9cdcd"/><rect x="10" y="12" width="2" height="2" fill="#c9cdcd"/><rect x="14" y="12" width="2" height="2" fill="#c9cdcd"/><rect x="4" y="12" width="2" height="2" fill="#c9cdcd"/><rect x="8" y="12" width="2" height="2" fill="#c9cdcd"/><rect x="12" y="14" width="2" height="2" fill="#c9cdcd"/><rect x="16" y="14" width="2" height="2" fill="#c9cdcd"/><rect x="2" y="14" width="2" height="2" fill="#c9cdcd"/><rect x="6" y="14" width="2" height="2" fill="#c9cdcd"/><rect x="14" y="16" width="2" height="2" fill="#c9cdcd"/><rect x="18" y="16" width="2" height="2" fill="#c9cdcd"/><rect x="0" y="16" width="2" height="2" fill="#c9cdcd"/><rect x="4" y="16" width="2" height="2" fill="#c9cdcd"/><rect x="16" y="18" width="2" height="2" fill="#c9cdcd"/><rect x="2" y="18" width="2" height="2" fill="#c9cdcd"/><rect x="0" y="0" width="2" height="2" fill="#efa59c"/><rect x="18" y="0" width="2" height="2" fill="#efa59c"/><rect x="2" y="2" width="2" height="2" fill="#efa59c"/><rect x="16" y="2" width="2" height="2" fill="#efa59c"/><rect x="4" y="4" width="2" height="2" fill="#efa59c"/><rect x="14" y="4" width="2" height="2" fill="#efa59c"/><rect x="6" y="6" width="2" height="2" fill="#efa59c"/><rect x="12" y="6" width="2" height="2" fill="#efa59c"/><rect x="8" y="8" width="2" height="2" fill="#efa59c"/><rect x="10" y="8" width="2" height="2" fill="#efa59c"/><rect x="8" y="10" width="2" height="2" fill="#efa59c"/><rect x="10" y="10" width="2" height="2" fill="#efa59c"/><rect x="12" y="12" width="2" height="2" fill="#efa59c"/><rect x="6" y="12" width="2" height="2" fill="#efa59c"/><rect x="14" y="14" width="2" height="2" fill="#efa59c"/><rect x="4" y="14" width="2" height="2" fill="#efa59c"/><rect x="16" y="16" width="2" height="2" fill="#efa59c"/><rect x="2" y="16" width="2" height="2" fill="#efa59c"/><rect x="18" y="18" width="2" height="2" fill="#efa59c"/><rect x="0" y="18" width="2" height="2" fill="#efa59c"/></svg>
<svg style="left:1826px;top:1030px" width="30" height="34" viewBox="1826 1030 30 34">
<rect x="1834" y="1038" width="14" height="10" fill="#fafafa"/>
<g fill="#9d9d9d">
<rect x="1828" y="1038" width="2" height="22"/>
<rect x="1830" y="1060" width="24" height="2"/>
<rect x="1852" y="1036" width="2" height="26"/>
<rect x="1846" y="1036" width="8" height="2"/>
<rect x="1848" y="1038" width="2" height="10"/>
<rect x="1850" y="1040" width="2" height="2"/>
<rect x="1832" y="1042" width="2" height="6"/>
<rect x="1834" y="1048" width="14" height="2"/>
<rect x="1834" y="1052" width="14" height="8"/>
<rect x="1832" y="1032" width="2" height="2"/>
<rect x="1830" y="1034" width="6" height="2"/>
<rect x="1832" y="1036" width="6" height="2"/>
<rect x="1834" y="1038" width="6" height="2"/>
<rect x="1842" y="1038" width="2" height="2"/>
<rect x="1836" y="1040" width="8" height="2"/>
<rect x="1838" y="1042" width="6" height="2"/>
<rect x="1836" y="1044" width="8" height="2"/>
</g>
<g fill="#a2aeec">
<rect x="1830" y="1040" width="2" height="20"/>
<rect x="1832" y="1048" width="2" height="12"/>
<rect x="1850" y="1042" width="2" height="18"/>
<rect x="1848" y="1048" width="2" height="12"/>
<rect x="1834" y="1050" width="14" height="2"/>
</g>
<rect x="1836" y="1054" width="4" height="6" fill="#e4e4e4"/>
<rect x="1850" y="1038" width="2" height="2" fill="#dcdcdc"/>
</svg>
</div></div>
</body></html>
